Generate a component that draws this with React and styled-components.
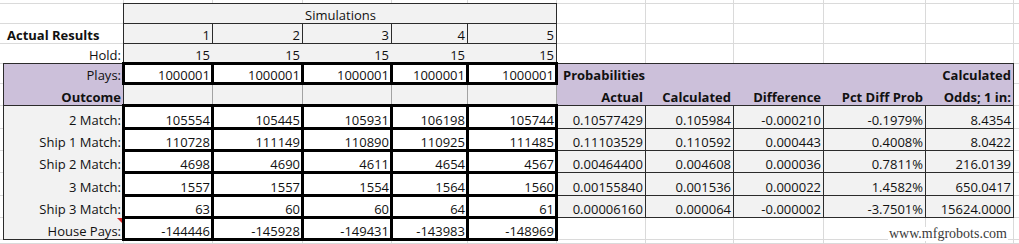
import styled, { createGlobalStyle, css } from "styled-components";

const GRID = "#dadada";
const DARK = "#2b2b2b";
const SOFT = "#a3a3a3";
const GRAY = "#f2f2f2";
const PURPLE = "#ccc0da";

const GlobalStyle = createGlobalStyle`
  body {
    margin: 0;
    background: #fff;
    font-family: "Open Sans", "Liberation Sans", sans-serif;
    font-size: 13px;
    color: #111;
  }
`;

const Sheet = styled.div`
  position: relative;
  display: grid;
  grid-template-columns: 4px 120px 89px 90px 89px 76px 89px 89px 88px 90px 102px 88px 5px;
  grid-template-rows: 4px 20px 20px 20px 20px 22px 23px 22px 22px 23px 22px 22px 4px;
  width: 1019px;
  height: 244px;
  overflow: hidden;
`;

const start = (w) => (w === 3 ? -2 : w === 1 ? -1 : 0);
const end = (w) => (w === 3 ? -1 : 0);

// excel style borders: drawn centred on the grid line, over the neighbours
const edgeCss = ({ t = [0, "transparent"], r = [0, "transparent"], b = [0, "transparent"], l = [0, "transparent"] }) => css`
  &::after {
    content: "";
    position: absolute;
    pointer-events: none;
    z-index: ${Math.max(t[0], r[0], b[0], l[0])};
    top: ${start(t[0])}px;
    left: ${start(l[0])}px;
    right: ${end(r[0])}px;
    bottom: ${end(b[0])}px;
    border-style: solid;
    border-width: ${t[0]}px ${r[0]}px ${b[0]}px ${l[0]}px;
    border-color: ${t[1]} ${r[1]} ${b[1]} ${l[1]};
  }
`;

const Cell = styled.div`
  position: relative;
  display: flex;
  align-items: flex-end;
  justify-content: ${({ $align }) =>
    $align === "right" ? "flex-end" : $align === "center" ? "center" : "flex-start"};
  grid-column: span ${({ $span }) => $span || 1};
  padding: 0 3px 1px ${({ $indent }) => ($indent ? 6 : 3)}px;
  line-height: 15px;
  background: ${({ $fill }) => $fill || "#fff"};
  box-shadow: ${({ $fill }) => ($fill ? "none" : `inset -1px -1px 0 0 ${GRID}`)};
  font-weight: ${({ $bold }) => ($bold ? 700 : 400)};
  white-space: nowrap;
  ${({ $edges }) => $edges && edgeCss($edges)}
`;

const Note = styled.span`
  position: absolute;
  top: 0;
  right: 2px;
  width: 0;
  height: 0;
  border-top: 5px solid #d42020;
  border-left: 5px solid transparent;
`;

const Watermark = styled.div`
  position: absolute;
  right: 11px;
  bottom: 3px;
  z-index: 5;
  font-family: "Liberation Serif", serif;
  font-size: 14px;
  line-height: 14px;
  color: #3a3a3a;
  background: #fff;
  padding: 0 1px;
`;

const thin = [1, DARK];
const thick = [3, "#000"];
const soft = [1, SOFT];
const box = { t: thin, r: thin, b: thin, l: thin };
const heavy = { t: thick, r: thick, b: thick, l: thick };

const blanks = (n) => Array.from({ length: n }, () => ({}));
const five = [0, 1, 2, 3, 4];

const outcomes = [
  ["2 Match:", [105554, 105445, 105931, 106198, 105744], ["0.10577429", "0.105984", "-0.000210", "-0.1979%", "8.4354"]],
  ["Ship 1 Match:", [110728, 111149, 110890, 110925, 111485], ["0.11103529", "0.110592", "0.000443", "0.4008%", "8.0422"]],
  ["Ship 2 Match:", [4698, 4690, 4611, 4654, 4567], ["0.00464400", "0.004608", "0.000036", "0.7811%", "216.0139"]],
  ["3 Match:", [1557, 1557, 1554, 1564, 1560], ["0.00155840", "0.001536", "0.000022", "1.4582%", "650.0417"]],
  ["Ship 3 Match:", [63, 60, 60, 64, 61], ["0.00006160", "0.000064", "-0.000002", "-3.7501%", "15624.0000"]],
];
const housePays = [-144446, -145928, -149431, -143983, -148969];
const headings = ["Actual", "Calculated", "Difference", "Pct Diff Prob", "Odds; 1 in:"];

const rows = [
  blanks(13),
  [{}, {}, { text: "Simulations", span: 5, fill: GRAY, align: "center", edges: box }, ...blanks(6)],
  [
    {},
    { text: "Actual Results", bold: true },
    ...five.map((i) => ({ text: i + 1, fill: GRAY, align: "right", edges: box })),
    ...blanks(6),
  ],
  [
    {},
    { text: "Hold:", align: "right" },
    ...five.map((i) => ({
      text: 15,
      fill: GRAY,
      align: "right",
      edges: { l: i === 0 ? thin : undefined, r: i === 4 ? thin : undefined },
    })),
    ...blanks(6),
  ],
  [
    {},
    { text: "Plays:", fill: PURPLE, align: "right", edges: { t: thin, l: thin } },
    ...five.map(() => ({ text: 1000001, align: "right", edges: heavy })),
    { text: "Probabilities", bold: true, fill: PURPLE, edges: { t: thin }, indent: true },
    { fill: PURPLE, edges: { t: thin } },
    { fill: PURPLE, edges: { t: thin } },
    { fill: PURPLE, edges: { t: thin } },
    { text: "Calculated", bold: true, fill: PURPLE, align: "right", edges: { t: thin, r: thin } },
    {},
  ],
  [
    {},
    { text: "Outcome", bold: true, fill: PURPLE, align: "right", edges: { l: thin, b: thin } },
    ...five.map((i) => ({ fill: GRAY, edges: { l: i === 0 ? thin : soft, r: soft } })),
    ...headings.map((h, i) => ({
      text: h,
      bold: true,
      fill: PURPLE,
      align: "right",
      edges: { b: thin, r: i === 4 ? thin : undefined },
    })),
    {},
  ],
  ...outcomes.map(([label, sims, probs]) => [
    {},
    { text: label, fill: GRAY, align: "right", edges: { l: thin } },
    ...sims.map((n) => ({ text: n, align: "right", edges: heavy })),
    ...probs.map((p) => ({ text: p, fill: GRAY, align: "right", edges: box })),
    {},
  ]),
  [
    {},
    { text: "House Pays:", fill: GRAY, align: "right", edges: { l: thin, b: thin }, note: true },
    ...housePays.map((n) => ({ text: n, align: "right", edges: heavy })),
    ...blanks(6),
  ],
  blanks(13),
];

export default function App() {
  return (
    <>
      <GlobalStyle />
      <Sheet>
        {rows.flatMap((row, r) =>
          row.map((c, i) => (
            <Cell
              key={`${r}-${i}`}
              $span={c.span}
              $fill={c.fill}
              $align={c.align}
              $bold={c.bold}
              $edges={c.edges}
              $indent={c.indent}
            >
              {c.note && <Note />}
              {c.text}
            </Cell>
          ))
        )}
        <Watermark>www.mfgrobots.com</Watermark>
      </Sheet>
    </>
  );
}
